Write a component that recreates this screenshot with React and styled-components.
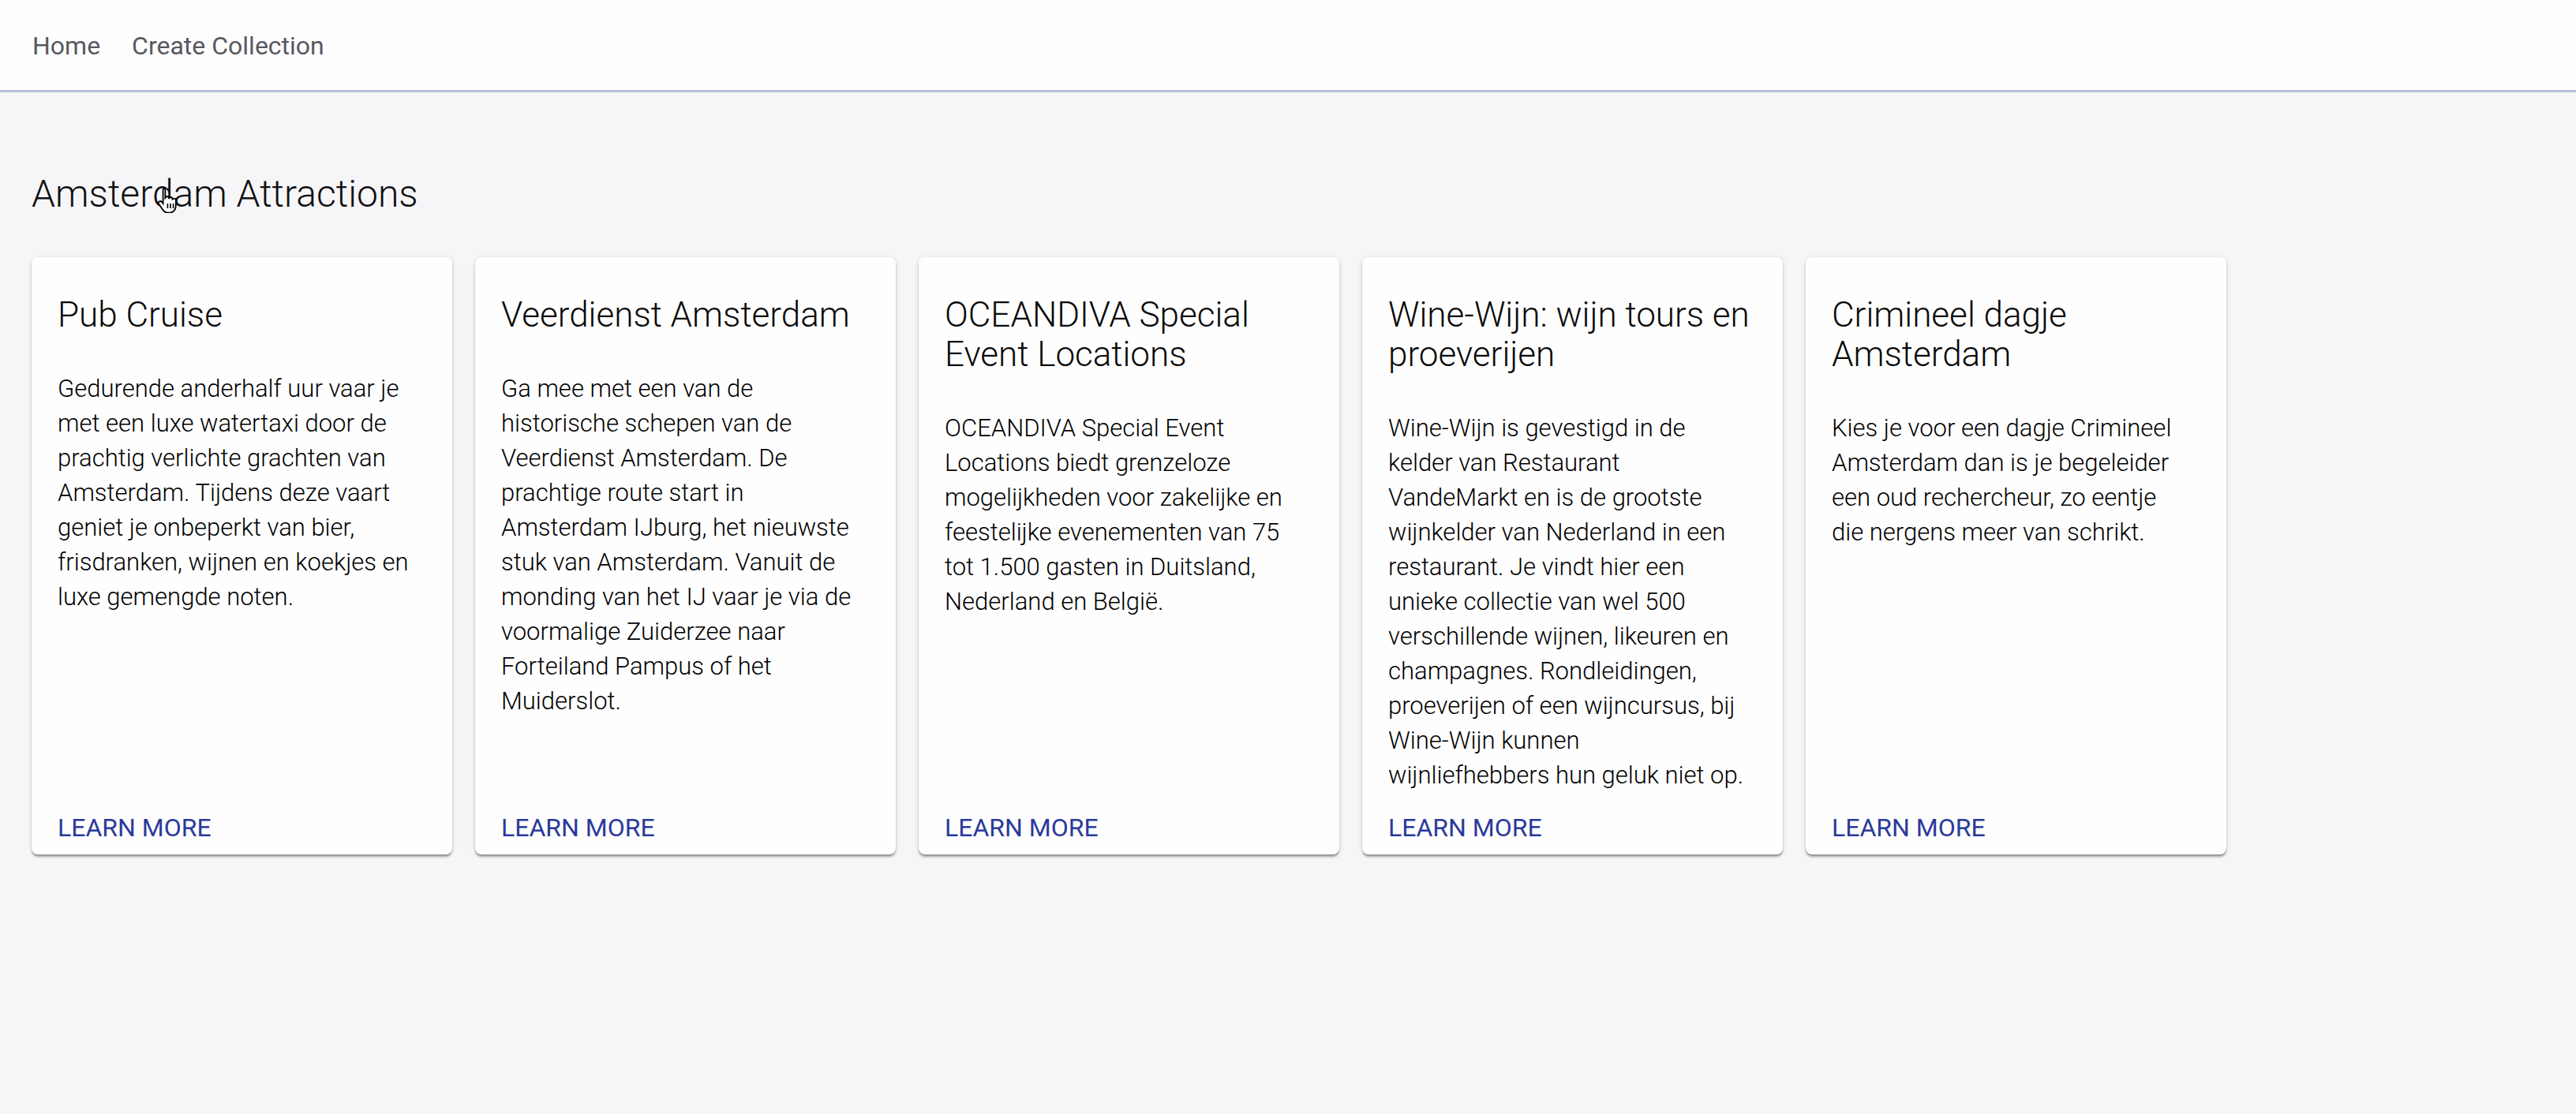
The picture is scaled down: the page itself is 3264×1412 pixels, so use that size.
import React from "react";
import styled, { createGlobalStyle } from "styled-components";

// line breaks follow the original card layout
const attractions = [
  {
    title: "Pub Cruise",
    text: "Gedurende anderhalf uur vaar je\nmet een luxe watertaxi door de\nprachtig verlichte grachten van\nAmsterdam. Tijdens deze vaart\ngeniet je onbeperkt van bier,\nfrisdranken, wijnen en koekjes en\nluxe gemengde noten.",
  },
  {
    title: "Veerdienst Amsterdam",
    text: "Ga mee met een van de\nhistorische schepen van de\nVeerdienst Amsterdam. De\nprachtige route start in\nAmsterdam IJburg, het nieuwste\nstuk van Amsterdam. Vanuit de\nmonding van het IJ vaar je via de\nvoormalige Zuiderzee naar\nForteiland Pampus of het\nMuiderslot.",
  },
  {
    title: "OCEANDIVA Special Event Locations",
    text: "OCEANDIVA Special Event\nLocations biedt grenzeloze\nmogelijkheden voor zakelijke en\nfeestelijke evenementen van 75\ntot 1.500 gasten in Duitsland,\nNederland en België.",
  },
  {
    title: "Wine-Wijn: wijn tours en proeverijen",
    text: "Wine-Wijn is gevestigd in de\nkelder van Restaurant\nVandeMarkt en is de grootste\nwijnkelder van Nederland in een\nrestaurant. Je vindt hier een\nunieke collectie van wel 500\nverschillende wijnen, likeuren en\nchampagnes. Rondleidingen,\nproeverijen of een wijncursus, bij\nWine-Wijn kunnen\nwijnliefhebbers hun geluk niet op.",
  },
  {
    title: "Crimineel dagje Amsterdam",
    text: "Kies je voor een dagje Crimineel\nAmsterdam dan is je begeleider\neen oud rechercheur, zo eentje\ndie nergens meer van schrikt.",
  },
];

const GlobalStyle = createGlobalStyle`
  html, body {
    margin: 0;
    padding: 0;
    background: #f6f6f9;
    font-family: Roboto, "Noto Sans", "Liberation Sans", sans-serif;
  }
`;

const HandCursor = () => (
  <CursorWrap>
    <svg width="30" height="34" viewBox="0 0 15 17">
      <path
        d="M4.5 1.2c.7 0 1.2.5 1.2 1.2v5.2l.1-.1c0-.6.5-1 1.1-1s1.1.5 1.1 1.1v.4c.1-.6.6-1 1.1-1 .6 0 1.1.5 1.1 1.1v.6c.1-.5.6-.9 1.1-.9.6 0 1.1.5 1.1 1.1v3.6c0 2.4-1.7 4.3-4.1 4.3H7.4c-1.4 0-2.3-.6-3-1.6L1.6 11.3c-.4-.6-.2-1.3.4-1.6.5-.3 1.1-.2 1.5.3l.8 1V2.4c0-.7.5-1.2 1.2-1.2z"
        fill="#fff"
        stroke="#000"
        strokeWidth="0.9"
      />
      <path d="M7.2 11v3M9 11v3M10.8 11v3" stroke="#000" strokeWidth="0.8" />
    </svg>
  </CursorWrap>
);

const App = () => {
  return (
    <Root>
      <GlobalStyle />
      <Header>
        <NavLink>Home</NavLink>
        <NavLink>Create Collection</NavLink>
      </Header>
      <Main>
        <TitleWrap>
          <PageTitle>Amsterdam Attractions</PageTitle>
          <HandCursor />
        </TitleWrap>
        <CardRow>
          {attractions.map((item) => (
            <Card key={item.title}>
              <CardContent>
                <CardTitle>{item.title}</CardTitle>
                <CardText>{item.text}</CardText>
              </CardContent>
              <CardActions>
                <LearnMore>LEARN MORE</LearnMore>
              </CardActions>
            </Card>
          ))}
        </CardRow>
      </Main>
    </Root>
  );
};

const Root = styled.div`
  min-height: 1412px;
  background: #f6f6f9;
`;

const Header = styled.header`
  height: 117px;
  display: flex;
  align-items: center;
  gap: 40px;
  padding: 0 41px;
  background: #fdfdfe;
  border-bottom: 3px solid #b6bdd8;
  box-sizing: border-box;
`;

const NavLink = styled.span`
  font-size: 32px;
  font-weight: 400;
  color: #58585f;
  cursor: pointer;
  padding-top: 2px;
`;

const Main = styled.main`
  padding: 101px 40px 0;
`;

const TitleWrap = styled.div`
  position: relative;
`;

const PageTitle = styled.h1`
  margin: 0;
  font-size: 48px;
  line-height: 56px;
  font-weight: 300;
  color: #111;
`;

const CursorWrap = styled.div`
  position: absolute;
  left: 158px;
  top: 18px;
`;

const CardRow = styled.div`
  display: flex;
  align-items: stretch;
  gap: 29px;
  margin-top: 52px;
`;

const Card = styled.div`
  width: 533px;
  min-height: 757px;
  display: flex;
  flex-direction: column;
  background: #fefefe;
  border-radius: 8px;
  box-shadow: 0 4px 3px -1px rgba(0, 0, 0, 0.25), 0 2px 2px 0 rgba(0, 0, 0, 0.16),
    0 1px 6px 0 rgba(0, 0, 0, 0.12);
`;

const CardContent = styled.div`
  flex: 1;
  padding: 48px 30px 0 33px;
`;

const CardTitle = styled.h2`
  margin: 0 0 47px;
  font-size: 44px;
  line-height: 50px;
  font-weight: 300;
  color: #0a0a0a;
`;

const CardText = styled.p`
  margin: 0;
  font-size: 31px;
  line-height: 44px;
  font-weight: 300;
  color: #000;
  white-space: pre-line;
`;

const CardActions = styled.div`
  padding: 0 33px 14px;
`;

const LearnMore = styled.span`
  display: inline-block;
  font-size: 32px;
  line-height: 40px;
  font-weight: 400;
  color: #2b3a9a;
  cursor: pointer;
`;

export default App;
